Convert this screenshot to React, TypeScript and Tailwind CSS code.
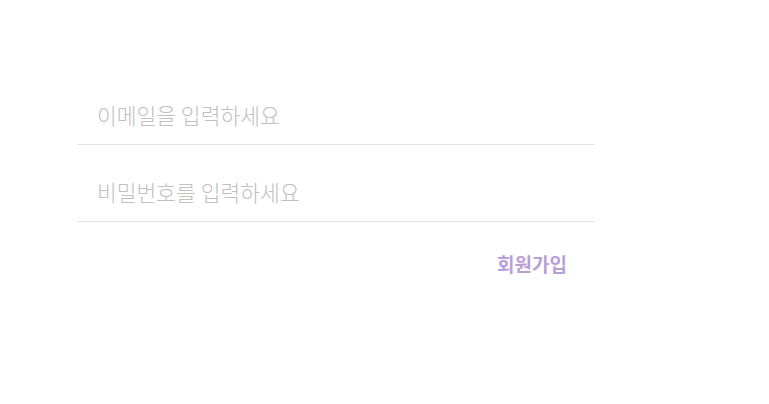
export default function App() {
  return (
    <div
      className="min-h-[404px] bg-white"
      style={{ fontFamily: '"Noto Sans CJK KR", "Noto Sans", sans-serif' }}
    >
      <div className="ml-[77px] w-[518px] pt-[88px]">
        <input
          type="email"
          placeholder="이메일을 입력하세요"
          className="block h-[57px] w-full border-b border-[#e5e5e5] pb-1 pl-5 text-[21.5px] font-light text-[#555] outline-none placeholder:text-[#c0c0c0]"
        />
        <input
          type="password"
          placeholder="비밀번호를 입력하세요"
          className="mt-5 block h-[57px] w-full border-b border-[#e5e5e5] pb-1 pl-5 text-[21.5px] font-light text-[#555] outline-none placeholder:text-[#c0c0c0]"
        />
        <div className="flex justify-end pr-[28px] pt-[32px]">
          <button className="text-[19px] font-bold leading-none text-[#b79fd9]">
            회원가입
          </button>
        </div>
      </div>
    </div>
  );
}
